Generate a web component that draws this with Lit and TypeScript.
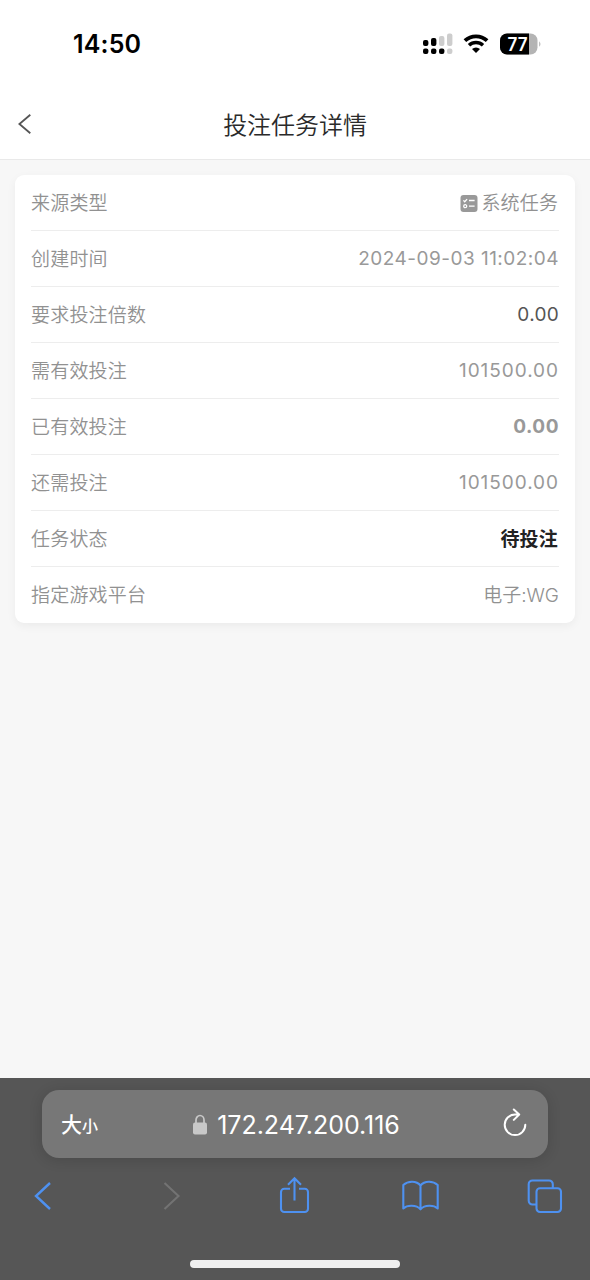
import { LitElement, html, css, svg } from "lit";
import { customElement, property } from "lit/decorators.js";
import { classMap } from "lit/directives/class-map.js";

interface Row {
  label: string;
  value: string;
  tone?: "date" | "dark" | "strong" | "status" | "cjk" | "mixed";
  icon?: boolean;
}

const ROWS: Row[] = [
  { label: "来源类型", value: "系统任务", icon: true, tone: "cjk" },
  { label: "创建时间", value: "2024-09-03 11:02:04", tone: "date" },
  { label: "要求投注倍数", value: "0.00", tone: "dark" },
  { label: "需有效投注", value: "101500.00" },
  { label: "已有效投注", value: "0.00", tone: "strong" },
  { label: "还需投注", value: "101500.00" },
  { label: "任务状态", value: "待投注", tone: "status" },
  { label: "指定游戏平台", value: "电子:WG", tone: "mixed" },
];

@customElement("status-bar")
export class StatusBar extends LitElement {
  static styles = css`
    :host {
      display: flex;
      justify-content: space-between;
      align-items: center;
      height: 88px;
      box-sizing: border-box;
      padding: 0 48px 0 73px;
      background: #fff;
      color: #000;
    }
    .time {
      font: 600 25px/30px Inter, sans-serif;
      letter-spacing: 0.15px;
    }
    .icons {
      display: block;
    }
    .level {
      font: 600 18px Inter, sans-serif;
    }
  `;
  render() {
    const dot = (x: number, y: number, h: number, on: boolean) =>
      svg`<rect x=${x} y=${y} width="5.4" height=${h} rx="2" fill=${on ? "#000" : "#cdcdcd"}></rect>`;
    return html`
      <span class="time">14:50</span>
      <svg class="icons" width="120" height="24" viewBox="0 0 120 24">
        ${dot(1, 8, 6, true)}${dot(9, 6, 8, true)}${dot(17, 4, 10, false)}${dot(25, 1.5, 12.5, false)}
        ${dot(1, 16.4, 5.6, true)}${dot(9, 16.4, 5.6, true)}${dot(17, 16.4, 5.6, true)}${dot(25, 16.4, 5.6, false)}
        <path d="M42.900 8.700a16.300 16.300 0 0 1 22.200 0" fill="none" stroke="#000" stroke-width="3.800"></path>
        <path d="M47 13.200a10.400 10.400 0 0 1 14 0" fill="none" stroke="#000" stroke-width="3.500"></path>
        <path d="M54 21l-4-4a5.900 5.900 0 0 1 8 0z" fill="#000"></path>
        <clipPath id="cell"><rect x="78" y="1.5" width="37.5" height="21" rx="7"></rect></clipPath>
        <g clip-path="url(#cell)">
          <rect x="78" y="1" width="38" height="22" fill="#b4b4b4"></rect>
          <rect x="78" y="1" width="29" height="22" fill="#000"></rect>
        </g>
        <path d="M117.2 9.2q2.5 2.8 0 5.6z" fill="#b4b4b4"></path>
        <text class="level" x="85.5" y="18.5" textLength="20" lengthAdjust="spacingAndGlyphs" fill="#fff">77</text>
      </svg>
    `;
  }
}

@customElement("page-header")
export class PageHeader extends LitElement {
  static styles = css`
    :host {
      display: grid;
      grid-template-columns: 60px 1fr 60px;
      align-items: center;
      height: 72px;
      box-sizing: border-box;
      background: #fff;
      border-bottom: 1px solid #e9e9e9;
    }
    .title {
      margin: 0;
      padding-top: 1px;
      text-align: center;
      font: 350 24px/34px "Noto Sans CJK SC", sans-serif;
      letter-spacing: -0.05px;
      color: #2a2a2a;
    }
    .back {
      display: block;
      margin-left: 17px;
    }
  `;
  render() {
    return html`
      <svg class="back" width="16" height="22" viewBox="0 0 16 22">
        <path d="M13.3 1.8L2.4 11L13.3 20.2" fill="none" stroke="#555" stroke-width="1.8"></path>
      </svg>
      <h1 class="title">投注任务详情</h1>
    `;
  }
}

@customElement("detail-card")
export class DetailCard extends LitElement {
  @property({ attribute: false }) rows: Row[] = [];
  static styles = css`
    :host {
      display: block;
      margin: 15px 15px 0;
      padding: 0 16px;
      border-radius: 9px;
      background: #fff;
      box-shadow: 0 3px 10px rgba(0, 0, 0, 0.05);
      font: 400 19px/28px Inter, "Noto Sans CJK SC", sans-serif;
      color: #999;
    }
    .row {
      display: flex;
      justify-content: space-between;
      align-items: center;
      height: 56px;
      box-sizing: border-box;
      border-bottom: 1px solid #ededed;
    }
    .row:last-child {
      border-bottom: 0;
    }
    .label {
      letter-spacing: 0.2px;
      font-weight: 350;
      color: #919191;
      padding-top: 2px;
    }
    .value {
      display: flex;
      align-items: center;
      gap: 3px;
      letter-spacing: 0.95px;
      padding-top: 1px;
    }
    .date {
      letter-spacing: 0.48px;
    }
    .cjk {
      letter-spacing: 0.2px;
      font-weight: 350;
      color: #919191;
      padding-top: 2px;
      padding-right: 0.8px;
    }
    .mixed {
      letter-spacing: 0;
      font-weight: 350;
      color: #919191;
    }
    .dark {
      color: #555;
      letter-spacing: 0.3px;
    }
    .strong {
      font-weight: 700;
      letter-spacing: 0.5px;
    }
    .status {
      font-weight: 700;
      color: #222;
      letter-spacing: 0.2px;
      padding-top: 2px;
      padding-right: 1px;
    }
  `;
  render() {
    return this.rows.map(
      (r) => html`<div class="row">
        <span class="label">${r.label}</span>
        <span class=${classMap({ value: true, [r.tone ?? "plain"]: true })}>
          ${r.icon
            ? html`<svg width="18" height="18" viewBox="0 0 18 18">
                <rect x="0.5" y="0" width="17" height="17" rx="3" fill="#999"></rect>
                <g fill="none" stroke="#fff" stroke-width="1.3">
                  <path d="M3.400 5.400l1.300 1.300 2.400-2.600M9 5.500h5.600M9 11.200h5.600"></path>
                  <circle cx="5.200" cy="11.200" r="1.500"></circle>
                </g>
              </svg>`
            : null}<span>${r.value}</span>
        </span>
      </div>`
    );
  }
}

@customElement("browser-bar")
export class BrowserBar extends LitElement {
  static styles = css`
    :host {
      display: flex;
      flex-direction: column;
      align-items: center;
      height: 202px;
      box-sizing: border-box;
      padding: 12px 0;
      background: #565656;
      color: #fff;
    }
    .address {
      display: grid;
      grid-template-columns: 60px 1fr 60px;
      align-items: center;
      width: 506px;
      height: 68px;
      box-sizing: border-box;
      padding: 0 19px;
      border-radius: 17px;
      background: #777;
      box-shadow: 0 2px 14px rgba(0, 0, 0, 0.14);
    }
    .size {
      display: flex;
      align-items: baseline;
      font: 500 21px/30px "Noto Sans CJK SC", sans-serif;
    }
    .small {
      font-size: 16px;
    }
    .host {
      display: flex;
      justify-content: center;
      align-items: center;
      gap: 9px;
      padding: 2px 0 0 2px;
      font: 400 25px/32px Inter, sans-serif;
      letter-spacing: -0.03px;
    }
    .reload {
      justify-self: end;
    }
    .tools {
      display: flex;
      justify-content: space-between;
      width: 542px;
      margin: 18px 4px 0 0;
      fill: none;
      stroke: #4e91f0;
      stroke-width: 2.1;
    }
    .off {
      stroke: #737373;
    }
    .home {
      width: 210px;
      height: 8px;
      margin-top: 44px;
      border-radius: 4px;
      background: #f0f0f0;
    }
  `;
  render() {
    return html`
      <div class="address">
        <span class="size">大<span class="small">小</span></span>
        <span class="host">
          <svg width="16" height="22" viewBox="0 0 16 22">
            <path d="M4 10V6a4 4.500 0 0 1 8 0v4" fill="none" stroke="#c8c8c8" stroke-width="1.700"></path>
            <rect x="1" y="8.500" width="14" height="12" rx="2" fill="#c8c8c8"></rect>
          </svg>
          <span>172.247.200.116</span>
        </span>
        <svg class="reload" width="28" height="32" viewBox="0 0 28 32">
          <path d="M17.500 6.500H14A10.300 10.300 0 1 0 24.300 16.800M12.800 1.500l5.400 5-5.400 5.400" fill="none" stroke="#fff" stroke-width="2" stroke-linecap="round" stroke-linejoin="round"></path>
        </svg>
      </div>
      <div class="tools">
        <svg width="40" height="40" viewBox="0 0 40 40"><path d="M28 7L14 20l14 13" stroke-width="2.4"></path></svg>
        <svg class="off" width="40" height="40" viewBox="0 0 40 40"><path d="M16.500 7l14 13-14 13"></path></svg>
        <svg width="40" height="40" viewBox="0 0 40 40">
          <path d="M17 12.700h-5.700a3.300 3.300 0 0 0-3.300 3.300v16.700a3.300 3.300 0 0 0 3.300 3.300h20.400a3.300 3.300 0 0 0 3.300-3.300V16a3.300 3.300 0 0 0-3.300-3.300H26M21.500 24.500V2.500M15 8.800L21.500 2.300l6.500 6.500"></path>
        </svg>
        <svg width="40" height="40" viewBox="0 0 40 40" stroke-linejoin="round">
          <path d="M21.500 9.500C17.500 4.600 9 4.600 4.300 9v23.500c4-3.700 13-3.700 17.200 0.800 4.200-4.500 13.200-4.500 17.200-0.800V9C34 4.600 25.500 4.600 21.500 9.500zV33.300"></path>
        </svg>
        <svg width="40" height="40" viewBox="0 0 40 40">
          <rect x="12.500" y="12.300" width="24.500" height="23.700" rx="3.500"></rect>
          <path d="M12.500 28.500H8.500A3.800 3.800 0 0 1 4.700 24.700V8.300A3.800 3.800 0 0 1 8.500 4.500h16.500a3.800 3.800 0 0 1 3.800 3.800v4"></path>
        </svg>
      </div>
      <div class="home"></div>
    `;
  }
}

@customElement("app-root")
export class AppRoot extends LitElement {
  static styles = css`
    :host {
      display: flex;
      flex-direction: column;
      height: 1280px;
      background: #f7f7f7;
    }
    .content {
      flex: 1;
    }
  `;
  render() {
    return html`
      <status-bar></status-bar>
      <page-header></page-header>
      <main class="content"><detail-card .rows=${ROWS}></detail-card></main>
      <browser-bar></browser-bar>
    `;
  }
}
